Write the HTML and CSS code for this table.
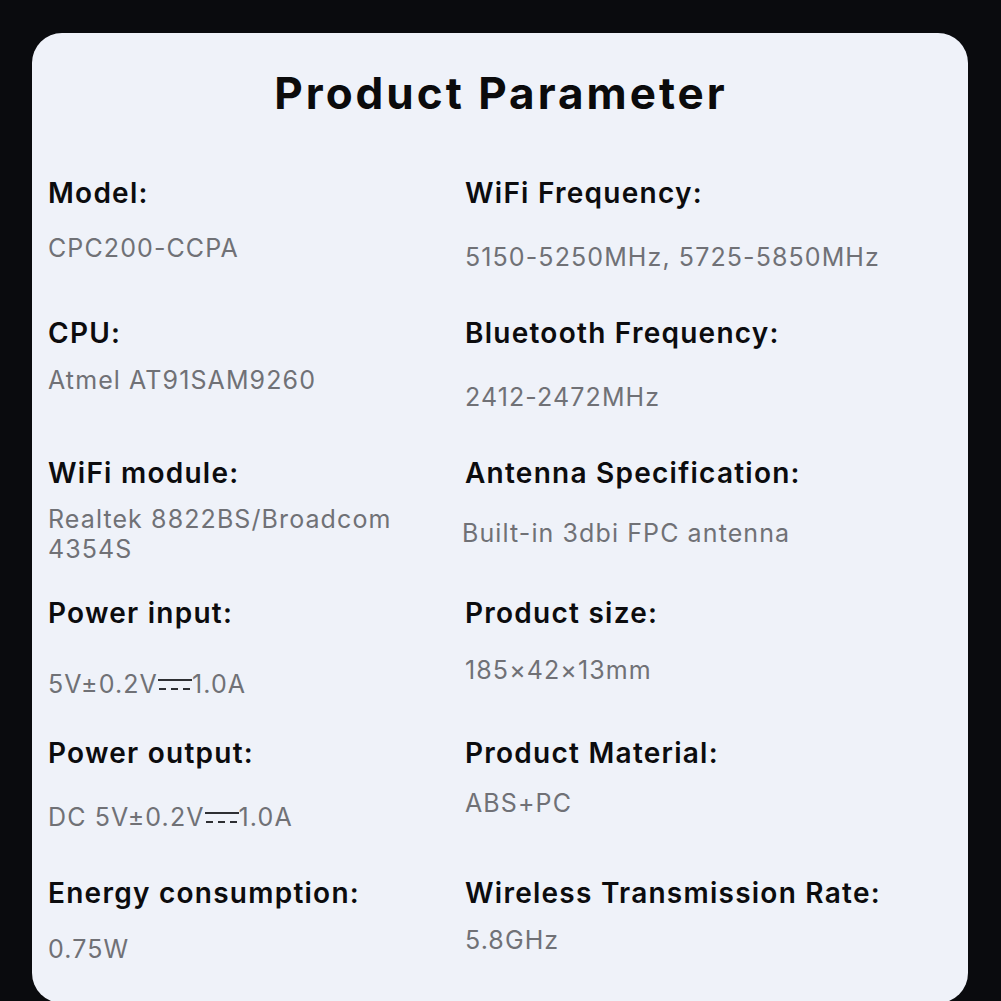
FILE: index.html
```html
<!DOCTYPE html>
<html lang="en">
<head>
<meta charset="utf-8">
<title>Product Parameter</title>
<link rel="stylesheet" href="styles.css">
</head>
<body>
<main class="card">
  <h1 class="title">Product Parameter</h1>
  <section class="grid">
    <div class="cell">
      <div class="label">Model:</div>
      <div class="value gap-22">CPC200-CCPA</div>
    </div>
    <div class="cell">
      <div class="label">WiFi Frequency:</div>
      <div class="value gap-31">5150-5250MHz, 5725-5850MHz</div>
    </div>

    <div class="cell">
      <div class="label">CPU:</div>
      <div class="value gap-14">Atmel AT91SAM9260</div>
    </div>
    <div class="cell">
      <div class="label">Bluetooth Frequency:</div>
      <div class="value gap-31">2412-2472MHz</div>
    </div>

    <div class="cell">
      <div class="label">WiFi module:</div>
      <div class="value gap-13">Realtek 8822BS/Broadcom<br>4354S</div>
    </div>
    <div class="cell">
      <div class="label">Antenna Specification:</div>
      <div class="value gap-27 nudge">Built-in 3dbi FPC antenna</div>
    </div>

    <div class="cell">
      <div class="label">Power input:</div>
      <div class="value gap-38">5V±0.2V<svg class="dc" viewBox="0 0 34 20" width="34" height="20" aria-hidden="true"><line x1="0" y1="6" x2="34" y2="6"/><line x1="1" y1="15" x2="8" y2="15"/><line x1="13" y1="15" x2="20" y2="15"/><line x1="25" y1="15" x2="32" y2="15"/></svg>1.0A</div>
    </div>
    <div class="cell">
      <div class="label">Product size:</div>
      <div class="value gap-24">185×42×13mm</div>
    </div>

    <div class="cell">
      <div class="label">Power output:</div>
      <div class="value gap-31">DC 5V±0.2V<svg class="dc" viewBox="0 0 34 20" width="34" height="20" aria-hidden="true"><line x1="0" y1="6" x2="34" y2="6"/><line x1="1" y1="15" x2="8" y2="15"/><line x1="13" y1="15" x2="20" y2="15"/><line x1="25" y1="15" x2="32" y2="15"/></svg>1.0A</div>
    </div>
    <div class="cell">
      <div class="label">Product Material:</div>
      <div class="value gap-17">ABS+PC</div>
    </div>

    <div class="cell">
      <div class="label">Energy consumption:</div>
      <div class="value gap-23">0.75W</div>
    </div>
    <div class="cell">
      <div class="label">Wireless Transmission Rate:</div>
      <div class="value gap-14">5.8GHz</div>
    </div>
  </section>
</main>
</body>
</html>
```

FILE: styles.css
```css
* { box-sizing: border-box; }

html, body {
  margin: 0;
  padding: 0;
}

body {
  background: #0a0b0e;
  font-family: "Inter", "Noto Sans", sans-serif;
  width: 1001px;
  height: 1001px;
  overflow: hidden;
  padding: 33px 33px 0 32px;
}

.card {
  width: 936px;
  height: 970px;
  background: #eff2f9;
  border-radius: 30px;
  padding: 35px 20px 0 16px;
}

.title {
  margin: 0;
  text-align: center;
  font-size: 44px;
  line-height: 50px;
  font-weight: 700;
  color: #0b0b0c;
  letter-spacing: 3px;
  padding-left: 6px;
}

.grid {
  margin-top: 57px;
  display: grid;
  grid-template-columns: 417px 1fr;
  grid-auto-rows: 140px;
}

.label {
  font-size: 28px;
  line-height: 36px;
  font-weight: 600;
  color: #0c0c0e;
  letter-spacing: 1.25px;
}

.value {
  font-size: 25px;
  line-height: 30px;
  font-weight: 400;
  color: #707176;
  letter-spacing: 1.1px;
}

.nudge { margin-left: -3px; }

.gap-13 { margin-top: 13px; }
.gap-14 { margin-top: 14px; }
.gap-17 { margin-top: 17px; }
.gap-22 { margin-top: 22px; }
.gap-23 { margin-top: 23px; }
.gap-24 { margin-top: 24px; }
.gap-27 { margin-top: 27px; }
.gap-31 { margin-top: 31px; }
.gap-38 { margin-top: 38px; }

.dc {
  display: inline-block;
  vertical-align: -1px;
  stroke: #2e2f33;
  stroke-width: 2;
  margin: 0;
}
```
